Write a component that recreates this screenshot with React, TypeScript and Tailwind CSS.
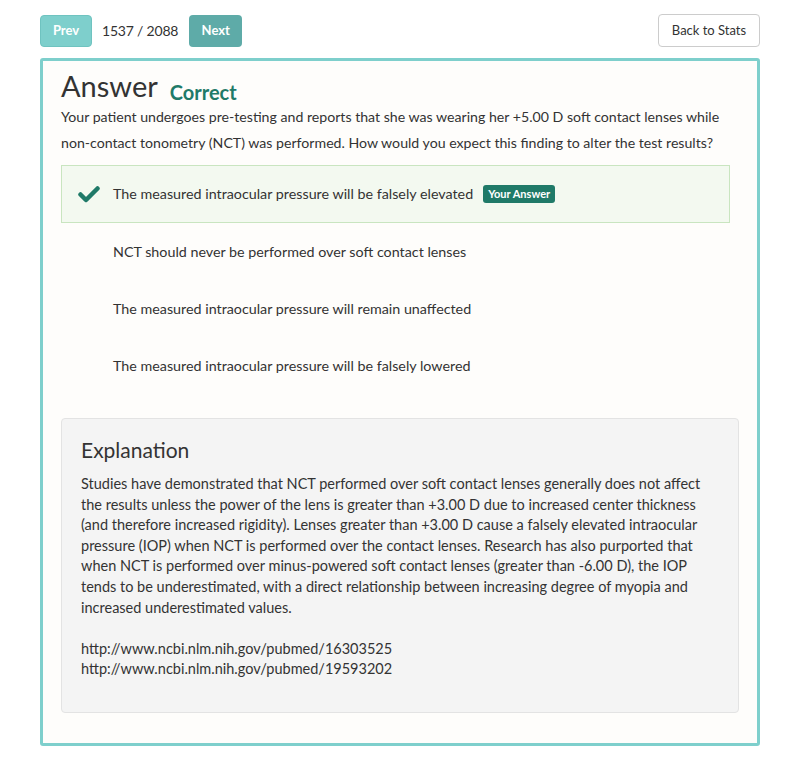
import React from "react";

function Check() {
  return (
    <svg width="22" height="18" viewBox="0 0 22 18" className="shrink-0">
      <path d="M2.5 9.5 L8 15 L19.5 3.5" fill="none" stroke="#1f7a68" strokeWidth="4.5" strokeLinecap="round" strokeLinejoin="round" />
    </svg>
  );
}

export default function App() {
  const options = [
    "NCT should never be performed over soft contact lenses",
    "The measured intraocular pressure will remain unaffected",
    "The measured intraocular pressure will be falsely lowered",
  ];
  return (
    <div className="min-h-[769px] w-[800px] bg-white text-[#333] [font-family:Lato,'Noto_Sans',sans-serif]">
      <div className="px-[40px] pt-[14px]">
        <div className="flex items-center">
          <button className="h-[32px] w-[52px] rounded-[4px] border border-[#6fc3c0] bg-[#7ecfcc] text-[13px] font-bold text-white">Prev</button>
          <span className="ml-[10px] text-[14px] tracking-[-0.2px] text-[#333]">1537 / 2088</span>
          <button className="ml-[11px] h-[32px] w-[53px] rounded-[4px] bg-[#5eaba8] text-[13px] font-bold text-white">Next</button>
          <button className="ml-auto h-[33px] w-[102px] rounded-[4px] border border-[#ccc] bg-white text-[13px] text-[#333]">Back to Stats</button>
        </div>
        <div className="mt-[11px] rounded-[3px] border-[3px] border-[#7ecfcc] bg-[#fefdfb] px-[18px] pb-[30px] pt-[7px]">
          <div className="flex items-end">
            <h1 className="text-[29px] leading-[36px] text-[#333]">Answer</h1>
            <span className="ml-[12px] mb-[-3px] text-[20px] font-bold text-[#1f7a68]">Correct</span>
          </div>
          <p className="text-[14.15px] leading-[26px] text-[#333]">
            Your patient undergoes pre-testing and reports that she was wearing her +5.00 D soft contact lenses while non-contact tonometry (NCT) was performed. How would you expect this finding to alter the test results?
          </p>
          <div className="mt-[9px] mr-[9px]">
            <div className="flex h-[58px] items-center border border-[#c9e5c0] bg-[#f3f9f0] pl-[16px] text-[14.3px]">
              <Check />
              <span className="ml-[13px]">The measured intraocular pressure will be falsely elevated</span>
              <span className="ml-[10px] rounded-[3px] bg-[#1f7a68] px-[5px] py-[2px] text-[11px] font-bold leading-[14px] text-white">Your Answer</span>
            </div>
            {options.map((o) => (
              <div key={o} className="flex h-[57px] items-center pl-[52px] text-[14.3px]">{o}</div>
            ))}
          </div>
          <div className="mt-[24px] rounded-[4px] border border-[#e3e3e3] bg-[#f4f4f4] px-[19px] pb-[32px] pt-[17px] text-[14.5px] leading-[20.6px]">
            <h2 className="text-[21px] leading-[28px] text-[#333]">Explanation</h2>
            <p className="mt-[10px]">
              Studies have demonstrated that NCT performed over soft contact lenses generally does not affect the results unless the power of the lens is greater than +3.00 D due to increased center thickness (and therefore increased rigidity). Lenses greater than +3.00 D cause a falsely elevated intraocular pressure (IOP) when NCT is performed over the contact lenses. Research has also purported that when NCT is performed over minus-powered soft contact lenses (greater than -6.00 D), the IOP tends to be underestimated, with a direct relationship between increasing degree of myopia and increased underestimated values.
            </p>
            <p className="mt-[20.6px]">http://www.ncbi.nlm.nih.gov/pubmed/16303525</p>
            <p>http://www.ncbi.nlm.nih.gov/pubmed/19593202</p>
          </div>
        </div>
      </div>
    </div>
  );
}
